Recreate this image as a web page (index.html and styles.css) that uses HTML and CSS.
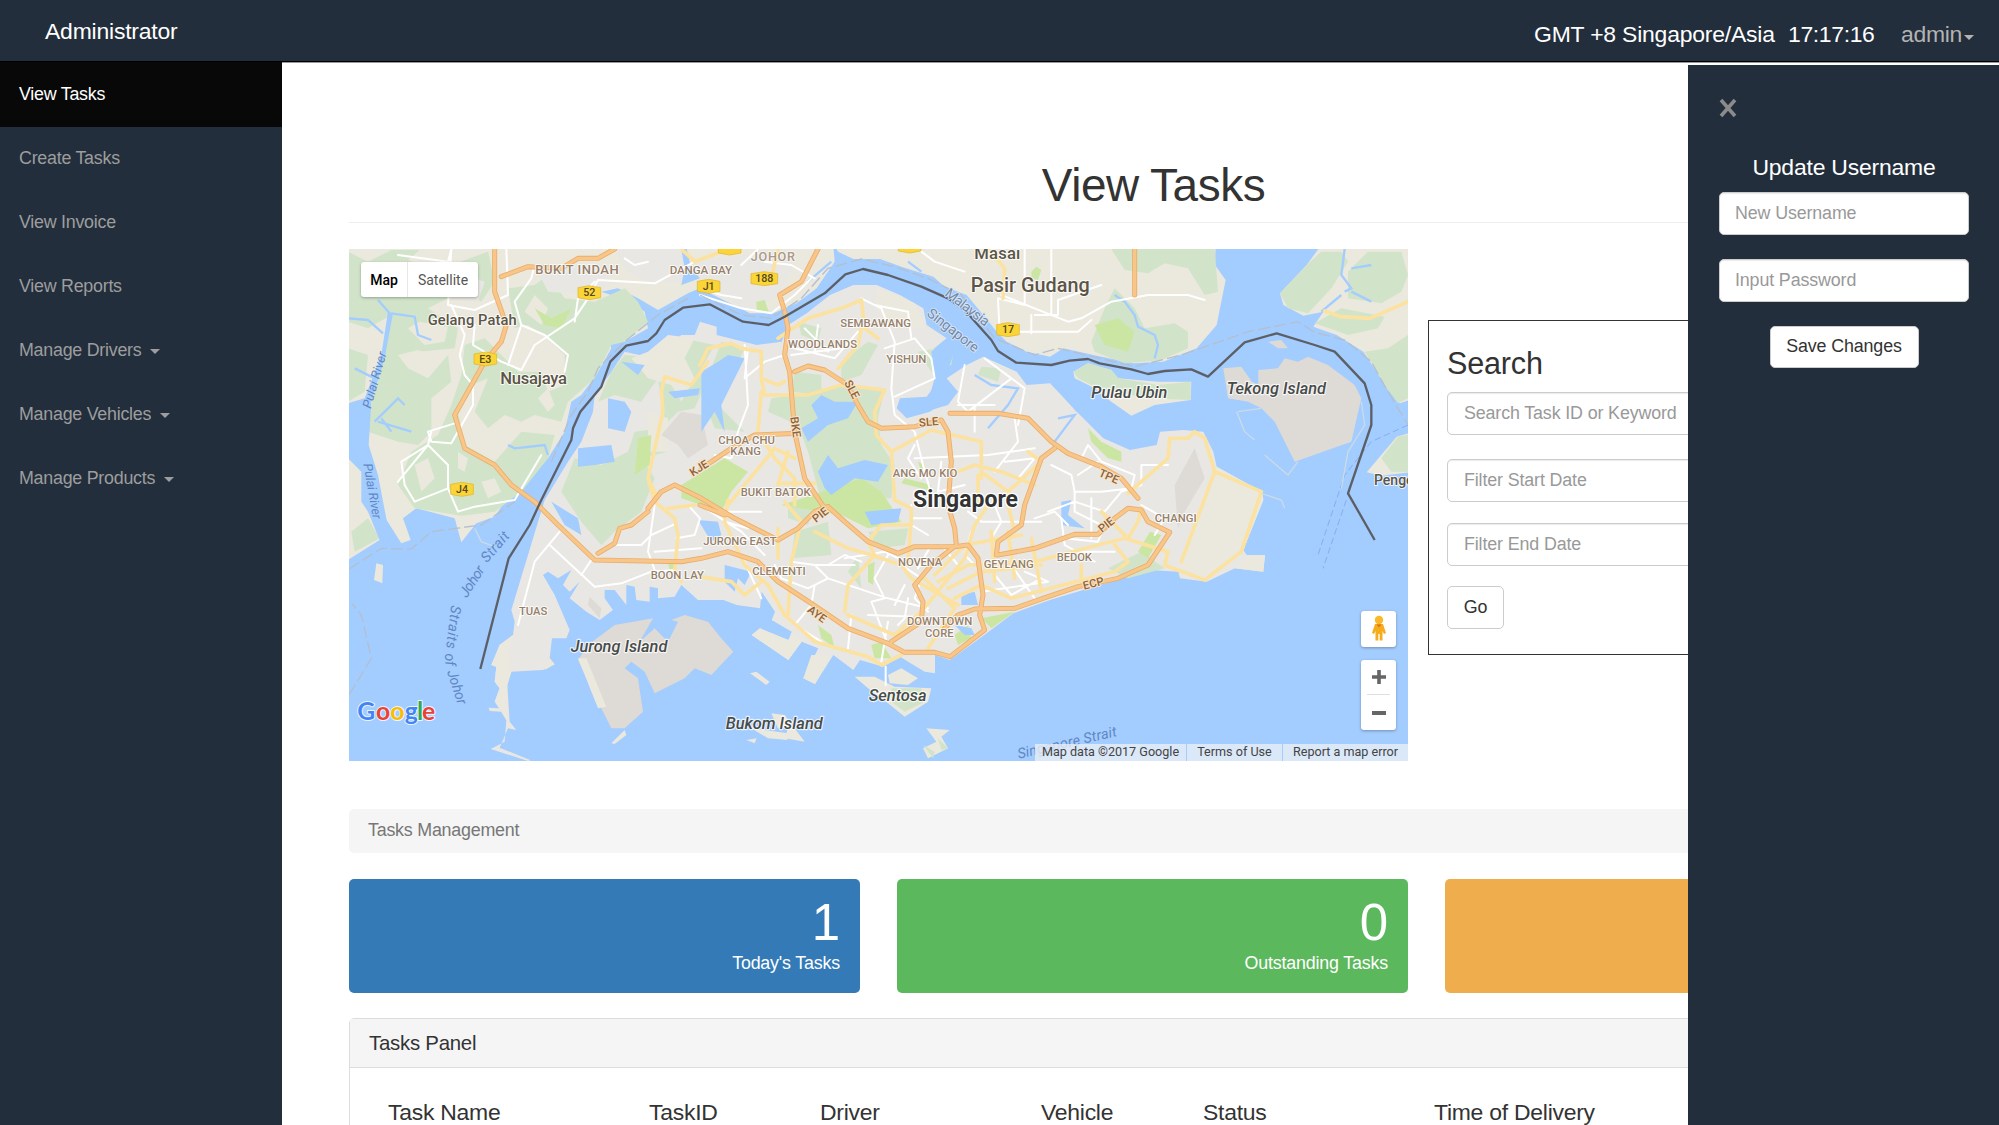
FILE: index.html
```html
<!DOCTYPE html>
<html lang="en">
<head>
<meta charset="utf-8">
<title>View Tasks</title>
<link rel="stylesheet" href="styles.css">
</head>
<body>
<header class="navbar">
  <div class="brand">Administrator</div>
  <div class="nav-right"><span class="zone">GMT +8 Singapore/Asia</span><span class="clock">17:17:16</span><a class="user">admin<i class="caret"></i></a></div>
</header>
<div class="page">
  <nav class="sidebar">
    <a class="item active">View Tasks</a>
    <a class="item">Create Tasks</a>
    <a class="item">View Invoice</a>
    <a class="item">View Reports</a>
    <a class="item">Manage Drivers<i class="caret"></i></a>
    <a class="item">Manage Vehicles<i class="caret"></i></a>
    <a class="item">Manage Products<i class="caret"></i></a>
  </nav>
  <main class="main">
    <h1>View Tasks</h1>
    <div class="top-row">
      <div class="map">
        <svg class="map-canvas" viewBox="3 12 3177 1536" preserveAspectRatio="none">
          <rect x="0" y="0" width="3200" height="1560" fill="#a3ccff"/>
          <!-- mainland Malaysia -->
          <g fill="#ebe8de">
            <path d="M0 0H1456L1460 50 1406 130 1346 175 1276 205 1206 205 1116 160 1056 130 1020 145 930 195 870 160 810 130 760 140 850 170 890 200 900 250 830 290 800 265 770 240 790 310 745 390 700 450 670 470 650 560 600 640 520 730 470 770 440 815 385 835 340 892 320 820 205 790 165 820 188 885 160 895 100 800 95 885 0 945Z"/>
            <path d="M1460 0L1470 20 1516 42 1596 42 1660 65 1756 95 1790 125 1856 150 1906 210 1946 260 1976 290 2036 320 2106 335 2146 310 2236 330 2356 355 2446 350 2546 310 2606 240 2633 105 2601 60 2603 0Z"/>
            <path d="M2920 0L2876 60 2796 145 2806 180 2866 212 2926 200 2896 245 2966 270 3046 320 3086 380 3116 430 3156 475 3200 460V0ZM3200 560L3146 575 3056 682 3100 692 3200 680Z"/>
          </g>
          <!-- woodland and mangrove -->
          <g fill="#d1e4c9">
            <path d="M0 20L60 50 130 15H215L180 45 310 100 300 160 240 190 330 250 320 310 210 320 180 370 240 400 300 330 310 410 250 460 250 560 210 600 150 590 60 560 70 480 110 330 130 210 60 250 0 230Z"/>
            <path d="M310 60L420 20 440 110 400 170 330 130ZM480 130L560 120 600 90 650 160 740 170 830 130 870 170 900 230 830 290 790 300 740 400 660 470 640 530 560 510 520 530 470 510 420 550 380 500 420 400 370 420 330 500 350 600 440 650 520 560 620 570 600 640 520 740 440 800 340 812 200 790 150 720 190 620 270 570 310 480 340 390 350 300 410 280 460 330 510 380 580 380 600 440 650 420 650 330 600 280 540 240 500 250Z"/>
            <path d="M0 310L60 330 50 440 0 470ZM10 860L60 820 95 880 20 920Z"/>
            <path d="M2290 12H2600L2610 140 2570 150 2520 70 2450 55 2400 85 2330 75ZM2300 130L2360 190 2390 250 2480 235 2520 260 2520 310 2440 345 2330 355 2240 320 2230 290 2270 190Z"/>
            <path d="M2920 20L2876 60 2796 145 2820 190 2880 205 2950 130 3000 50 2980 20ZM3000 80L3060 20 3160 20 3180 90 3160 140 3100 175 3000 160ZM2900 235L2980 190 3110 215 3090 250 3000 270ZM3050 320L3120 310 3180 270V460L3150 475 3110 420ZM3180 570L3150 575 3100 640 3130 680H3180Z"/>
          </g>
          <g fill="#ebe8de">
            <path d="M180 250L215 230 300 245 290 290 230 300ZM150 330L210 315 250 330 230 380 180 370ZM560 150L600 190 580 240 530 200ZM600 430L620 480 600 500 570 460ZM200 660L240 640 260 700 220 740ZM400 710L440 700 460 740 420 760ZM330 620L360 640 350 680 330 670Z"/>
          </g>
          <!-- Johor urban areas -->
          <g fill="#e8e7e3">
            <path d="M560 60L740 60 790 110 740 150 600 140ZM800 12H1000L1020 110 900 110 840 80ZM1010 50L1290 20 1340 60 1290 150 1200 200 1100 130Z"/>
            <path d="M330 80L410 110 390 170 310 160Z"/>
          </g>
          <!-- Singapore main island -->
          <path fill="#e8e7e3" d="M590 765L490 1095 500 1130 495 1170 455 1200 430 1260 445 1265 440 1310 455 1330 440 1370 460 1375 455 1390 422 1388 425 1398 460 1400 475 1425 470 1490 428 1512 540 1548 548 1546 455 1508 480 1450 505 1455 485 1430 478 1320 490 1280 585 1275 620 1258 605 1240 612 1180 655 1180 665 1155 620 1050 585 990 600 980 630 1000 670 975 645 1020 665 1040 695 1010 665 1060 715 1100 755 1125 795 1095 770 1060 770 1035 800 1035 835 1080 835 1020 860 1025 865 1065 905 1070 905 1025 930 1030 930 1060 980 1055 1000 1020 1050 1065 1126 1065 1166 1080 1236 1090 1241 1040 1281 1100 1271 1125 1331 1160 1321 1185 1236 1150 1211 1170 1321 1245 1361 1190 1411 1210 1366 1300 1401 1317 1456 1230 1516 1275 1536 1245 1606 1265 1656 1235 1730 1280 1761 1285 1761 1230 1806 1245 1916 1165 1996 1105 2106 1065 2306 1005 2406 975 2491 980 2496 1000 2576 1010 2661 970 2746 980 2751 930 2696 930 2686 915 2746 765 2742 740 2606 665 2596 620 2566 560 2506 555 2436 560 2426 600 2346 615 2266 580 2196 510 2106 415 2036 420 2006 380 1906 335 1856 360 1796 400 1830 440 1746 500 1676 520 1646 490 1656 460 1736 455 1776 400 1776 340 1746 320 1796 280 1736 240 1726 190 1656 150 1586 120 1516 120 1446 150 1376 205 1321 240 1301 290 1226 300 1106 270 1106 245 1056 230 1040 270 1000 270 920 340 830 320 790 380 740 450 735 500 700 590 660 650Z"/>
          <g fill="#ebe8de">
            <path d="M495 1170L455 1200 430 1260 445 1265 440 1310 455 1330 440 1370 460 1400 475 1425 478 1320 490 1280 480 1220ZM2606 665L2742 740 2746 765 2686 915 2576 1008 2490 960 2560 765ZM590 1275L620 1258 605 1240ZM1236 1150L1211 1170 1321 1245 1361 1190 1340 1170 1320 1185ZM1390 1230L1366 1300 1401 1317 1450 1230ZM1590 130L1700 175 1730 250 1620 250 1580 180ZM2660 970L2746 980 2751 930 2700 935Z"/>
          </g>
          <g fill="#d1e4c9">
            <path d="M830 330L930 340 1000 280 1100 300 1060 370 1070 420 1040 490 990 500 940 550 860 560 840 620 760 660 680 640 640 740 700 830 760 900 800 860 880 800 920 700 880 640 960 620 930 400 880 470 800 450 750 470 790 380Z"/>
            <path d="M1120 290L1190 310 1110 480 1190 560 1100 550 1060 450ZM1270 460L1400 440 1480 420 1610 430 1590 520 1600 600 1640 660 1630 760 1420 770 1380 620 1350 540 1260 500ZM1480 350L1560 290 1590 300 1540 390 1480 410ZM1340 380L1420 390 1420 450 1330 440ZM1350 230L1420 250 1410 290 1360 270Z"/>
            <path d="M1340 860L1440 830 1450 930 1330 940ZM1560 860L1680 850 1670 900 1590 910ZM1710 320L1820 300 1810 360 1750 380ZM1900 365L1960 370 1950 410 1890 390ZM2280 970L2380 920 2450 970 2340 1000ZM1500 980L1530 930 1540 1030ZM1320 780L1400 780 1380 840 1320 820Z"/>
          </g>
          <g fill="#ebe8de">
            <path d="M850 340L900 320 960 270 1040 280 1010 340 1040 400 1000 470 970 420 900 400ZM900 500L960 520 960 620 900 620Z"/>
          </g>
          <g fill="#cbe6a3">
            <path d="M1000 720L1130 640 1200 680 1150 740 1120 800 1000 760ZM1300 780L1440 735 1540 700 1600 740 1660 830 1560 850 1480 810ZM870 580L910 570 905 660 860 690ZM560 190L610 220 670 190 640 250 590 240ZM2240 240L2310 220 2360 260 2340 320 2270 300ZM2220 550L2260 590 2320 620 2320 650 2280 640 2230 590ZM1900 1120L2000 1100 1930 1150ZM1410 1140L1450 1170 1460 1210 1420 1180ZM1570 1200L1600 1190 1630 1240 1580 1240ZM1820 1170L1860 1140 1870 1180 1830 1200ZM2406 860L2440 870 2400 940 2370 920ZM1225 170L1250 165 1262 200 1226 195ZM1560 960L1580 950 1575 1020 1560 1010Z"/>
            <path d="M2050 80L2065 65 2080 75 2070 105 2050 100ZM1710 650L1730 660 1720 680ZM1670 700L1750 720 1740 735 1660 715ZM960 950L985 950 985 980 965 975Z"/>
          </g>
          <g fill="#dedad5">
            <path d="M2626 370L2680 365 2712 410 2731 420 2731 375 2790 370 2810 340 2850 350 2880 335 2940 360 3020 420 3040 460 3010 590 2870 640 2840 650 2820 610 2780 530 2740 490 2700 470 2640 460Z"/>
            <path d="M690 1245L720 1200 800 1140 915 1120 875 1190 920 1150 960 1190 990 1130 970 1125 1010 1110 1080 1130 1120 1180 1156 1220 1090 1290 1040 1270 1010 1300 920 1345 890 1280 850 1250 830 1270 870 1300 885 1400 830 1450 790 1450 760 1390Z"/>
            <path d="M1000 500L1060 510 1080 600 1020 640 990 600 940 570ZM725 1055L760 1090 755 1120 720 1080ZM2480 720L2540 610 2570 700 2510 800 2490 850Z"/>
            <path d="M2760 290L2800 285 2820 310 2790 310Z"/>
          </g>
          <g fill="#ebe8de">
            <path d="M690 1240L715 1240 775 1385 750 1390ZM790 1495L830 1455 835 1470 800 1497ZM85 955L105 960 103 1015 78 1005ZM1206 1285L1225 1280 1265 1310 1255 1320ZM1270 1405L1310 1410 1370 1490 1310 1480 1320 1450 1290 1450ZM1210 1450L1320 1465 1318 1485 1260 1480ZM1195 1485L1226 1480 1220 1495ZM1735 1450L1805 1455 1780 1475 1800 1510 1740 1540 1725 1510 1765 1490Z"/>
            <path d="M1620 1290L1660 1270 1710 1300 1680 1320 1625 1315ZM1520 1295L1580 1295 1640 1325 1750 1330 1740 1370 1670 1415 1620 1375 1560 1330Z"/>
            <path d="M2176 380L2220 355 2290 375 2310 400 2430 410 2530 410 2528 465 2420 480 2350 512 2290 470 2240 430 2180 400Z"/>
          </g>
          <g fill="#d1e4c9"><path d="M2176 380L2220 355 2290 375 2310 400 2430 420 2528 410 2528 465 2400 460 2250 430 2190 400ZM1630 1330L1720 1330 1730 1370 1670 1400 1630 1370ZM1726 1500L1760 1520 1755 1540ZM1770 1480L1800 1510 1780 1515Z"/></g>
          <!-- rivers and reservoirs -->
          <g fill="#a3ccff">
            <path d="M0 475L50 460 100 330 120 200 135 205 110 340 70 470 62 600 90 690 130 900 95 885 60 800 40 770 40 680 0 640Z"/>
            <path d="M690 610L790 600 800 650 740 660 690 665ZM780 460L830 470 850 500 830 560 780 550ZM1060 380L1110 350 1140 330 1190 340 1160 400 1120 480 1130 560 1100 500 1060 560 1060 470ZM1390 480L1420 450 1460 470 1530 470 1500 520 1440 540 1380 590 1360 550 1410 520ZM1410 680L1440 630 1470 670 1550 645 1620 660 1590 710 1520 700 1450 750 1430 730ZM1550 800L1660 790 1650 830 1570 840ZM1740 480L1780 420 1830 440 1800 480 1700 510ZM1750 320L1800 280 1830 290 1780 430 1740 470 1760 400ZM1130 960L1210 980 1190 1020 1170 1000 1160 1040 1130 1010ZM1050 825L1110 830 1120 870 1090 890ZM610 770L690 820 700 870 650 840ZM2140 770L2170 765 2160 810 2210 850 2140 840ZM1840 1050L1880 1040 1890 1080 1840 1080ZM1820 1140L1870 1150 1880 1170 1850 1170ZM1000 12H1016L1030 70 1056 100 1000 120 1010 70Z"/>
            <path d="M820 350L890 360 870 390ZM960 440L1056 430 1050 450 980 460Z"/>
          </g>
          <g class="creek">
            <path d="M125 205L90 165M0 220L60 225 105 265M130 205L200 215 210 270 250 285M20 370L80 400M80 530L150 460 170 480M90 530L190 560M100 520L130 560M480 600L500 610 590 600 600 630M2300 150L2330 170 2360 210 2370 245 2420 270 2430 300 2420 340M2980 150L2920 200M2990 140L3010 130 2980 90 2990 12M3010 70L3070 60M3010 140L3070 170M1880 390L1930 420 2010 430 1980 480 1920 550M2130 520L2180 510 2120 590M1450 50L1380 110M2120 420L2190 500M1680 50L1720 80"/>
          </g>
          <!-- minor roads -->
          <g class="road minor">
            <path d="M150 30L300 50 310 12 300 180 380 195 480 150 475 12M310 180L350 270 335 330 350 390 375 420 375 480 310 595 250 590 240 560 320 535M150 710L240 600 250 560M240 600L300 660 300 730 200 770 170 720 160 650 240 600M300 730L330 800 380 785 500 765 580 630M480 360L520 240 500 170 550 100 560 60M520 375L560 300 680 220 720 160 750 105 920 115 1040 50M520 240L590 270 660 330 650 380M380 240L375 300 460 350 520 375M680 230L690 160 740 110M830 40L860 60 900 50"/>
            <path d="M1056 130L1120 150 1180 160M1056 150L1180 190 1270 205 1340 150 1390 100M1400 100L1330 60 1250 50M1180 60L1230 12M1710 12L1760 50 1850 80M1920 12L1960 60M1960 150L2060 190 2160 230 2200 220 2290 170 2400 150 2520 150 2570 165M1950 165L1955 260H2190L2230 225M2050 210V265M2060 210H2130V165L2260 120M2110 12V210M2030 12V180L1950 160"/>
            <path d="M1200 310L1190 400 1250 350 1310 330M1190 300L1200 480 1170 560 1150 640 1100 630M1310 290L1340 310 1460 340 1530 260M1330 330L1480 310M1370 250L1440 320M1410 240L1400 320M1540 160L1600 190 1640 290 1630 430 1640 510 1700 560 1730 680 1760 780M1610 310L1700 280 1750 340 1760 400 1640 455M1580 180L1680 200 1690 280M1850 360L1830 470 1860 500 1990 400 1910 340 2030 430 2010 540M1880 480V560M1830 480H1940M1700 640L1920 630 2060 610M1940 680L2010 590 2000 520M1970 650L2060 640 2010 700M1780 650L1770 740 1850 720M1700 600L1680 640 1720 700"/>
            <path d="M635 860L560 950 510 1140M605 900L740 1025 820 1015 910 980 980 975M700 990L730 945M800 900H880L910 870 985 835M920 920L1060 910M920 780L900 920 920 975M1020 780L1056 820 1040 870 985 880M1056 780L1180 860 1250 930M1100 800H1240M1130 830L1200 850M1180 930L1240 1060M1330 950L1400 960 1440 1000 1530 1030 1620 1060 1740 1090M1280 960L1300 1000 1380 1030 1440 1000M1400 1020L1390 1080 1340 1140 1420 1190M1520 960L1400 960M1440 960L1490 930 1540 950M1490 940L1610 920 1690 960M1620 930L1580 1000 1610 1060 1570 1070 1620 1200M1660 960L1720 1000 1700 1060 1740 1100M1560 1110L1700 1115 1720 1140M1620 1130L1600 1250M1510 1110L1500 1210M1680 1060L1670 1120 1650 1140M1670 1020L1640 1080M1613 1265V1320M1690 780V840L1740 870M1690 820H1780M1860 800L1900 830 2080 830M1940 780L1960 830 1930 880M2060 820L2120 800 2160 840M1990 960L2060 1060M2030 980L2100 1010M1870 860L1850 930 1880 960M1940 990L1990 1050 2080 1000M1900 1040L2100 1010M1780 900L1830 960M1750 900L1710 970"/>
            <path d="M2110 660L2170 690 2180 740 2260 740 2350 730 2360 690 2260 650 2220 600 2200 640M2190 690L2250 650M2180 740V800L2260 840M2100 800L2180 770 2270 800 2320 740 2380 720 2380 660 2460 660M2230 760V880M2150 880L2250 890 2270 840M2140 820L2150 900 2240 950M2380 780L2450 820 2420 870M2170 920H2300"/>
          </g>
          <!-- arterial roads -->
          <g class="road arterial">
            <path d="M1080 350L1030 420 950 395 940 440 945 500 900 700 930 760M1000 12L1040 50 1120 20M1270 100L1290 12M1290 280L1380 220 1480 190 1540 165 1550 250 1590 280M1540 250L1530 300 1470 370M1056 360L1080 310 1150 295 1180 310 1240 320 1240 400 1290 420 1310 410M1240 400L1250 450 1380 450 1480 420 1610 435 1580 500 1585 570 1630 620 1640 760M1240 440L1230 560 1280 640 1340 700 1340 780M1140 780L1280 610 1340 640M1290 715H1400M1320 620L1290 720M1630 620L1750 555 1900 590 1900 700M1830 680L1880 660 1960 680 2060 720M1890 690L1890 780M1900 680L1980 740 2080 650 2040 620M1920 12L1970 70 1965 160M2340 745L2460 640 2465 580 2520 580 2540 560 2570 580 2600 680 2740 740 2680 920 2570 1005 2450 960 2460 920 2330 880M2600 680L2500 950M1400 860L1500 910 1570 930 1660 960 1690 1000 1830 1080M1140 765L1130 830 1190 960 1260 1020 1310 1110 1400 1190 1560 1235 1600 1260 1660 1230M1290 850L1290 940M1310 770L1360 830 1330 950 1320 1110M1056 995L1150 1010 1190 1050 1240 1010M1490 1100L1500 1020 1580 930 1560 890 1600 840 1690 840 1690 790 1640 765M1690 820L1680 950M1500 1110L1640 1170 1720 1100 1850 940 1880 840 1920 780M1730 1000L1820 1090 1740 1210M1760 990L1850 900M1770 1010L1860 960 2060 950 2250 900 2330 880M1800 1030L1900 980 2080 960M1820 1060L1900 1020 1990 1060 2300 980 2340 950 2300 900M1930 860L1940 1010M1980 860L2000 1000M2050 880L2080 1040M2200 960V1010M2260 800L2340 880 2370 830 2380 790M1850 900L2020 870M1980 780L2000 860M900 700L920 770 980 820 990 870 980 980 1000 1010M960 790L1040 780"/>
          </g>
          <path class="road arterial" d="M2930 198L2980 215 3066 220 3180 170"/>
          <!-- expressways -->
          <g class="road express-case"><use href="#express"/></g>
          <g class="road express">
            <path id="express" d="M440 0L440 140 475 240 460 290 410 350 320 510 350 610 440 660 490 720 560 770 630 840 740 945 1000 950 1060 940 1140 920 1230 950 1290 1010 1390 1075 1500 1150 1620 1195 1670 1222 1760 1222 1806 1235 1910 1155 1895 1110 1905 1050 1890 940 1860 900 1820 905 1700 905 1650 925 1560 890 1490 830 1440 785M460 95L540 65 640 70 690 40 750 40 800 12M1410 12L1360 110 1295 150 1310 200 1320 250 1310 330 1325 380 1340 560 1370 700 1430 790M1340 380L1380 363 1430 375 1500 420 1530 480 1560 530 1600 550 1700 545 1780 525 1800 560 1810 650 1800 780 1820 850 1825 900 1750 960 1700 1020 1725 1070 1720 1130 1630 1190M1806 505H1950L2040 520 2110 590 2160 625 2260 665 2320 700 2370 760M2120 610L2080 640 2030 780 2020 840 1950 890 1945 930M1350 565L1220 570 1150 610 1060 670M900 790L940 740 980 720 1060 760 1160 820 1290 885 1350 850 1400 800 1440 785M750 925L800 895 815 850 850 840 900 800M1950 930L2060 910 2180 868 2250 868 2300 820 2340 790 2380 795 2400 830 2465 862 2400 960 2310 1000 2190 1025 2100 1055 2000 1090 1880 1092 1830 1110 1790 1150M1056 780L1130 810M2360 12V150"/>
          </g>
          <!-- ferry routes and boundaries -->
          <path class="ferry" d="M3180 540L3070 590 2990 690 2910 930M2995 765L2925 970"/>
          <g class="boundary-dash">
            <path d="M3 972L100 910 190 912 250 860 400 840 500 770M3 1350L70 1240 40 1110 12 1075M610 650L670 510 720 440 750 370 830 290 930 210 1020 160M1056 150L1180 210 1270 220 1360 160 1440 70 1540 42 1640 65 1740 100 1840 150 1940 280 2060 330 2130 310 2360 365 2500 330 2700 260 2850 230 2900 262 2990 285 3070 350 3120 440 3180 540"/>
          </g>
          <path class="border" d="M397 1272L468 995 482 940 545 840 580 765 670 585 675 550 697 500 760 425 787 350 835 302 900 288 925 265 950 225 1005 188 1085 178 1185 230 1262 240 1310 215 1430 145 1492 88 1545 72 1620 90 1720 125 1800 160 1850 195 1930 285 1950 318 2005 353 2110 360 2165 347 2220 342 2255 355 2350 373 2400 387 2450 378 2530 373 2580 395 2690 292 2786 265 2900 300 2960 320 3050 415 3070 480 3070 540 3000 745 3080 885"/>
          <path class="reef" d="M2666 500L2690 560 2720 585M2750 630L2820 690 2850 650M3040 470L3050 540 3000 620 2980 730M2670 500L2740 490M380 850L400 890 440 905M2740 745L2800 765 2810 790"/>
          <!-- route shields -->
          <g class="shield">
            <g transform="translate(724 143)"><path d="M-34-15L0-21 34-15V15L0 21-34 15Z"/><text y="11">52</text></g>
            <g transform="translate(1082 124)"><path d="M-34-15L0-21 34-15V15L0 21-34 15Z"/><text y="11">J1</text></g>
            <g transform="translate(1249 101)"><path d="M-40-15L0-21 40-15V15L0 21-40 15Z"/><text y="11">188</text></g>
            <g transform="translate(1145 9)"><path d="M-34-15L0-21 34-15V15L0 21-34 15Z"/></g>
            <g transform="translate(1685 3)"><path d="M-34-15L0-21 34-15V15L0 21-34 15Z"/></g>
            <g transform="translate(1980 254)"><path d="M-34-15L0-21 34-15V15L0 21-34 15Z"/><text y="11">17</text></g>
            <g transform="translate(412 342)"><path d="M-34-15L0-21 34-15V15L0 21-34 15Z"/><text y="11">E3</text></g>
            <g transform="translate(342 733)"><path d="M-34-15L0-21 34-15V15L0 21-34 15Z"/><text y="11">J4</text></g>
          </g>
          <g class="town">
            <text x="239" y="240" font-size="44" textLength="267">Gelang Patah</text>
            <text x="457" y="418" font-size="50" textLength="200">Nusajaya</text>
            <text x="1879" y="42" font-size="50" textLength="138">Masai</text>
            <text x="1868" y="140" font-size="59" textLength="357" lengthAdjust="spacingAndGlyphs">Pasir Gudang</text>
            <text x="3078" y="720" font-size="42">Penge</text>
          </g>
          <text class="city" x="1695" y="787" font-size="72" textLength="315" lengthAdjust="spacingAndGlyphs">Singapore</text>
          <g class="district">
            <text x="562" y="88" font-size="39" textLength="250">BUKIT INDAH</text>
            <text x="965" y="86" font-size="35" textLength="187">DANGA BAY</text>
            <text x="1208" y="48" font-size="38" textLength="133" opacity=".75">JOHOR</text>
            <text x="1477" y="247" font-size="34" textLength="212">SEMBAWANG</text>
            <text x="1320" y="308" font-size="34" textLength="207">WOODLANDS</text>
            <text x="1615" y="354" font-size="34" textLength="120">YISHUN</text>
            <text x="1111" y="596" font-size="34" textLength="170">CHOA CHU</text>
            <text x="1147" y="630" font-size="34" textLength="92">KANG</text>
            <text x="1178" y="753" font-size="34" textLength="210">BUKIT BATOK</text>
            <text x="1634" y="696" font-size="34" textLength="194">ANG MO KIO</text>
            <text x="1066" y="900" font-size="34" textLength="220">JURONG EAST</text>
            <text x="908" y="1002" font-size="34" textLength="160">BOON LAY</text>
            <text x="513" y="1111" font-size="34" textLength="85">TUAS</text>
            <text x="1213" y="991" font-size="34" textLength="160">CLEMENTI</text>
            <text x="1650" y="964" font-size="34" textLength="133">NOVENA</text>
            <text x="1907" y="968" font-size="34" textLength="150">GEYLANG</text>
            <text x="2126" y="949" font-size="34" textLength="106">BEDOK</text>
            <text x="2420" y="831" font-size="34" textLength="126">CHANGI</text>
            <text x="1677" y="1140" font-size="34" textLength="196">DOWNTOWN</text>
            <text x="1731" y="1175" font-size="34" textLength="86">CORE</text>
          </g>
          <g class="island">
            <text x="2230" y="458" font-size="49" textLength="228" lengthAdjust="spacingAndGlyphs">Pulau Ubin</text>
            <text x="2636" y="447" font-size="49" textLength="298" lengthAdjust="spacingAndGlyphs">Tekong Island</text>
            <text x="668" y="1222" font-size="49" textLength="290" lengthAdjust="spacingAndGlyphs">Jurong Island</text>
            <text x="1133" y="1451" font-size="49" textLength="291" lengthAdjust="spacingAndGlyphs">Bukom Island</text>
            <text x="1562" y="1367" font-size="49" textLength="174" lengthAdjust="spacingAndGlyphs">Sentosa</text>
          </g>
          <g class="expname">
            <text transform="translate(1488 413) rotate(62)">SLE</text>
            <text transform="translate(1714 545) rotate(-5)">SLE</text>
            <text transform="translate(1327 517) rotate(82)">BKE</text>
            <text transform="translate(1034 695) rotate(-32)">KJE</text>
            <text transform="translate(1404 834) rotate(-38)">PIE</text>
            <text transform="translate(2262 864) rotate(-38)">PIE</text>
            <text transform="translate(2250 692) rotate(24)">TPE</text>
            <text transform="translate(2208 1034) rotate(-14)">ECP</text>
            <text transform="translate(1376 1099) rotate(36)">AYE</text>
          </g>
          <g class="water-name">
            <text transform="translate(68 492) rotate(-74)" textLength="174">Pulai River</text>
            <text transform="translate(46 658) rotate(80)" textLength="168">Pulai River</text>
            <text transform="translate(356 1060) rotate(-57)" font-size="43" textLength="102">Johor</text>
            <text transform="translate(417 955) rotate(-49)" font-size="43" textLength="106">Strait</text>
            <text transform="translate(310 1080) rotate(97)" font-size="43" textLength="130">Straits</text>
            <text transform="translate(290 1226) rotate(85)" font-size="43" textLength="38">of</text>
            <text transform="translate(297 1280) rotate(72)" font-size="43" textLength="106">Johor</text>
            <text transform="translate(2012 1541) rotate(-13)" font-size="43" textLength="304">Singapore Strait</text>
          </g>
          <g class="country">
            <text transform="translate(1788 150) rotate(38)" textLength="156">Malaysia</text>
            <text transform="translate(1734 210) rotate(38)" textLength="184">Singapore</text>
          </g>
          <g class="google" font-size="74">
            <text y="1424"><tspan x="28" fill="#4285f4">G</tspan><tspan x="84" fill="#ea4335">o</tspan><tspan x="127" fill="#fbbc05">o</tspan><tspan x="170" fill="#4285f4">g</tspan><tspan x="207" fill="#34a853">l</tspan><tspan x="222" fill="#ea4335">e</tspan></text>
          </g>
        </svg>
        <div class="map-type"><span class="on">Map</span><span>Satellite</span></div>
        <div class="map-tools">
          <div class="tool pegman"><svg width="16" height="26" viewBox="0 0 16 26"><circle cx="8" cy="5" r="4.2" fill="#fbb829"/><path d="M4 9h8l3 9-2 1-1.500-3v9.500H8.700V19H7.300v6.500H4.500V16L3 19l-2-1z" fill="#f5ac1d"/><path d="M5.500 9.500h5L8 12.500z" fill="#e2711d"/></svg></div>
          <div class="zoom"><svg width="35" height="34" viewBox="0 0 35 34"><path d="M11 17h14M18 10v14" stroke="#666" stroke-width="3.600"/></svg><i></i><svg width="35" height="34" viewBox="0 0 35 34"><path d="M11 18h14" stroke="#666" stroke-width="4"/></svg></div>
        </div>
        <div class="map-legal"><span>Map data ©2017 Google</span><span>Terms of Use</span><span>Report a map error</span></div>
      </div>
      <form class="search">
        <h3>Search</h3>
        <input type="text" placeholder="Search Task ID or Keyword">
        <input type="text" placeholder="Filter Start Date">
        <input type="text" placeholder="Filter End Date">
        <button type="button" class="btn go">Go</button>
      </form>
    </div>
    <div class="crumb">Tasks Management</div>
    <div class="cards">
      <div class="card blue"><b>1</b><span>Today's Tasks</span></div>
      <div class="card green"><b>0</b><span>Outstanding Tasks</span></div>
      <div class="card orange"></div>
    </div>
    <section class="panel">
      <div class="panel-head">Tasks Panel</div>
      <div class="thead"><span>Task Name</span><span>TaskID</span><span>Driver</span><span>Vehicle</span><span>Status</span><span>Time of Delivery</span></div>
    </section>
  </main>
</div>
<aside class="drawer">
  <svg class="close" width="18" height="20" viewBox="0 0 18 20"><path d="M2 2L16 18M16 2L2 18" stroke="#8b8b8b" stroke-width="3.600" fill="none"/></svg>
  <h4>Update Username</h4>
  <input type="text" placeholder="New Username">
  <input type="text" placeholder="Input Password">
  <button type="button" class="btn save">Save Changes</button>
</aside>
</body>
</html>
```
FILE: styles.css
```css
* { box-sizing: border-box; }
body { margin: 0; height: 1125px; overflow: hidden; position: relative; background: #fff; color: #333; font: 17.85px/26px "Liberation Sans", Arial, sans-serif; letter-spacing: -.25px; }
.navbar { height: 62px; padding: 0 25px 0 45px; display: flex; justify-content: space-between; background: #222e3c; border-bottom: 1px solid #000; color: #fff; font-size: 22.95px; }
.brand { line-height: 63px; letter-spacing: -.2px; }
.nav-right { display: flex; line-height: 69px; }
.zone { width: 254px; letter-spacing: -.2px; }
.clock { width: 113px; letter-spacing: -.35px; }
.user { color: #b3b3b3; display: flex; align-items: center; height: 69px; letter-spacing: -.3px; }
.caret { display: inline-block; border: 5px solid transparent; border-top-color: currentColor; border-bottom: 0; vertical-align: middle; }
.user .caret { margin: 5px 0 0 2px; }
.page { display: flex; height: 1063px; overflow: hidden; }
.sidebar { width: 282px; flex: none; background: #222e3c; }
.item { display: block; height: 64px; line-height: 63px; padding-left: 19px; color: #9d9d9d; }
.item.active { height: 65px; line-height: 65px; background: #080808; color: #fff; }
.item .caret { margin-left: 9px; }
.main { width: 1717px; flex: none; padding: 96px 41px 0 67px; border-top: 1px solid #999; overflow: hidden; }
h1, h3, h4 { margin: 0; font-weight: 400; }
h1 { height: 64px; font-size: 45.9px; line-height: 52px; text-align: center; letter-spacing: -.45px; border-bottom: 1px solid #eee; }
.top-row { display: flex; align-items: flex-start; gap: 20px; margin-top: 26px; }
.map { position: relative; width: 1059px; height: 512px; flex: none; overflow: hidden; font-family: Roboto, sans-serif; letter-spacing: 0; }
.map-canvas { display: block; width: 1059px; height: 512px; }
.map-canvas text { font-family: Roboto, sans-serif; stroke-linejoin: round; paint-order: stroke; }
.road { fill: none; stroke-linejoin: round; stroke-linecap: round; }
.minor { stroke: #fff; stroke-width: 6; }
.arterial { stroke: #fce2a0; stroke-width: 11; }
.express-case { stroke: #eaad6b; stroke-width: 15; }
.express { stroke: #f8c688; stroke-width: 10; }
.creek { fill: none; stroke: #a3ccff; stroke-width: 7; }
.border { fill: none; stroke: #5c6066; stroke-width: 7; stroke-linejoin: round; }
.boundary-dash { fill: none; stroke: #b4bfce; stroke-width: 4; stroke-dasharray: 36 12; }
.ferry { fill: none; stroke: #86aef0; stroke-width: 3; stroke-dasharray: 20 10; }
.reef { fill: none; stroke: #cbdbe6; stroke-width: 4; }
.shield path { fill: #fbd438; stroke: #e0b424; stroke-width: 2; }
.shield text { font-size: 32px; font-weight: 500; text-anchor: middle; fill: #544a20; }
.town text { fill: #5c5547; stroke: #fff; stroke-width: 6; stroke-opacity: .8; font-weight: 500; }
.city { fill: #333; stroke: #fff; stroke-width: 8; font-weight: 700; }
.district text { fill: #96806a; stroke: #fff; stroke-width: 6; stroke-opacity: .8; font-weight: 500; }
.island text { fill: #474b49; stroke: #fff; stroke-width: 7; stroke-opacity: .75; font-style: italic; font-weight: 500; }
.expname text { font-size: 34px; font-weight: 500; fill: #8a6440; stroke: #fbe3c4; stroke-width: 6; }
.water-name text { fill: #6087c4; font-style: italic; }
.water-name { font-size: 38px; }
.country text { font-size: 42px; fill: #7488a6; stroke: #d5e5f8; stroke-width: 5; }
.map-canvas .google text { font-family: Lato, sans-serif; font-weight: 700; stroke: #fff; stroke-width: 6; stroke-opacity: .8; }
.map-type { position: absolute; left: 12px; top: 13px; height: 35px; display: flex; background: #fff; border-radius: 3px; box-shadow: 0 1px 3px rgba(0,0,0,.3); font-size: 14px; line-height: 36px; color: #565656; }
.map-type span { width: 70px; text-align: center; }
.map-type .on { width: 47px; color: #000; font-weight: 500; border-right: 1px solid #e6e6e6; }
.map-tools { position: absolute; right: 12px; bottom: 31px; display: flex; flex-direction: column; gap: 13px; }
.tool, .zoom { width: 35px; background: #fff; border-radius: 3px; box-shadow: 0 1px 3px rgba(0,0,0,.3); }
.tool { height: 36px; display: flex; justify-content: center; padding-top: 4px; }
.zoom { height: 70px; }
.zoom svg { display: block; }
.zoom i { display: block; width: 23px; height: 1px; margin: 0 auto; background: #e0e0e0; }
.map-legal { position: absolute; right: 0; bottom: 0; height: 17px; display: flex; font-size: 12.6px; line-height: 16px; color: #444; }
.map-legal span { background: rgba(233,239,246,.8); white-space: nowrap; text-align: center; width: 95px; margin-left: 1px; }
.map-legal span:first-child { width: 151px; }
.map-legal span:last-child { width: 125px; }
.search { flex: 1; height: 335px; margin-top: 71px; padding: 25px 19px 0 18px; border: 1px solid #333; display: flex; flex-direction: column; }
h3 { font-size: 30.6px; line-height: 34px; letter-spacing: -.2px; margin-bottom: 12px; }
input { width: 100%; height: 43px; flex: none; padding: 0 16px; border: 1px solid #ccc; border-radius: 5px; background: #fff; font: 17.85px "Liberation Sans", Arial, sans-serif; letter-spacing: -.13px; box-shadow: inset 0 1px 1px rgba(0,0,0,.08); }
input::placeholder { color: #999; opacity: 1; }
.search input { padding-bottom: 1px; margin-bottom: 21px; }
.search input:nth-of-type(1) { margin-bottom: 24px; }
.btn { height: 43px; padding: 0; border: 1px solid #ccc; border-radius: 5px; background: #fff; color: #333; font: 17.85px "Liberation Sans", Arial, sans-serif; letter-spacing: -.13px; }
.go { width: 57px; padding-bottom: 1px; margin-top: -1px; }
.crumb { margin-top: 48px; height: 44px; padding-left: 19px; line-height: 42px; background: #f5f5f5; border-radius: 5px; color: #777; letter-spacing: -.22px; }
.cards { display: grid; grid-template-columns: repeat(3, 511px); gap: 37px; margin-top: 26px; }
.card { height: 114px; padding: 15px 20px 0 0; border-radius: 5px; color: #fff; text-align: right; display: flex; flex-direction: column; letter-spacing: -.18px; }
.card b { font-size: 51px; line-height: 58px; height: 56px; font-weight: 400; }
.blue { background: #337ab7; }
.green { background: #5cb85c; }
.orange { background: #f0ad4e; }
.panel { margin-top: 25px; height: 200px; border: 1px solid #ddd; border-radius: 5px; }
.panel-head { height: 49px; line-height: 48px; padding-left: 19px; background: #f5f5f5; border-bottom: 1px solid #ddd; font-size: 20.4px; }
.thead { display: grid; grid-template-columns: 261px 171px 221px 162px 231px 1fr; padding: 28px 0 0 38px; font-size: 22.95px; line-height: 32px; letter-spacing: -.25px; }
.drawer { position: absolute; left: 1688px; top: 65px; width: 311px; height: 1060px; padding: 33px 30px 0 31px; background: #222e3c; display: flex; flex-direction: column; }
.close { margin-bottom: 36px; }
.drawer h4 { color: #fff; font-size: 22.95px; line-height: 26px; text-align: center; letter-spacing: -.2px; margin-bottom: 12px; }
.drawer input { padding: 0 15px 1px; margin-bottom: 24px; }
.save { width: 149px; height: 42px; align-self: center; padding-bottom: 1px; }
```
